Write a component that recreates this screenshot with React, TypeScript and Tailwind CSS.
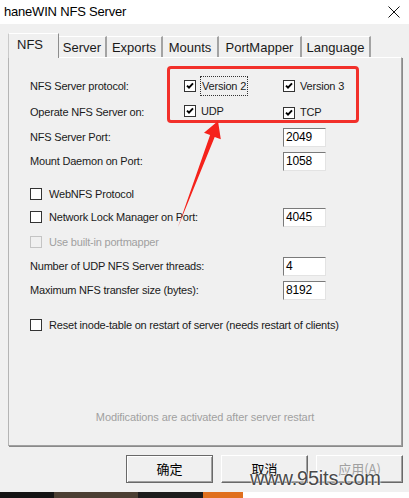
import React from 'react';

const Box = ({ checked = false, disabled = false }: { checked?: boolean; disabled?: boolean }) => (
  <span
    className={
      disabled
        ? 'flex h-[12px] w-[12px] shrink-0 items-center justify-center border border-[#c4c4c4] bg-[#f0f0f0]'
        : 'flex h-[12px] w-[12px] shrink-0 items-center justify-center border border-[#333333] bg-white'
    }
  >
    {checked && (
      <svg width="8" height="8" viewBox="0 0 8 8">
        <path d="M1 3.6l2 2.1L7 1.4" stroke="#000" strokeWidth="1.9" fill="none" />
      </svg>
    )}
  </span>
);

const Field = ({ value }: { value: string }) => (
  <div className="flex h-[19px] w-[43px] items-center border border-t-[#7a7a7a] border-l-[#7a7a7a] border-r-[#e3e3e3] border-b-[#e3e3e3] bg-white pl-[2px] text-[12px] tracking-[-0.2px] text-black">
    {value}
  </div>
);

const tabs = [
  { label: 'Server', w: 'w-[48px]' },
  { label: 'Exports', w: 'w-[56px]' },
  { label: 'Mounts', w: 'w-[56px]' },
  { label: 'PortMapper', w: 'w-[83px]' },
  { label: 'Language', w: 'w-[69px]' },
];

export default function App() {
  return (
    <div className="relative flex h-[498px] w-[409px] flex-col overflow-hidden bg-[#f0f0f0] font-['Liberation_Sans',Arial,sans-serif] text-[#1a1a1a]">
      {/* title bar */}
      <div className="flex h-[24px] shrink-0 items-center justify-between bg-white pl-[4px] pr-[9px]">
        <span className="text-[13px] tracking-[-0.2px] text-black">haneWIN NFS Server</span>
        <svg width="12" height="12" viewBox="0 0 12 12">
          <path d="M0.5 0.5l11 11M11.5 0.5l-11 11" stroke="#111" strokeWidth="1" />
        </svg>
      </div>

      {/* tabs */}
      <div className="ml-[8px] mt-[9px] flex h-[24px] shrink-0 items-end">
        <div className="z-10 -mb-px flex h-[25px] w-[51px] items-start border-l border-t border-l-[#c9c9c9] border-t-white border-r border-r-[#8d8d8d] bg-[#f0f0f0] pl-[8px] pt-[1px] text-[13px]">
          NFS
        </div>
        {tabs.map(t => (
          <div
            key={t.label}
            className={`${t.w} flex h-[21px] items-center justify-center border-t border-t-white border-r-2 border-r-[#a3a3a3] pt-[1px] text-[13px]`}
          >
            {t.label}
          </div>
        ))}
      </div>

      {/* panel */}
      <div className="relative ml-[8px] flex h-[389px] w-[394px] shrink-0 flex-col border border-t-white border-l-[#b4b4b4] border-r-[#a0a0a0] border-b-[#a0a0a0] pl-[21px] pt-[16px] text-[11px] tracking-[-0.2px] shadow-[1px_1px_0_#8a8a8a]">
        <div className="flex h-[24px] items-center">
          <span className="w-[154px]">NFS Server protocol:</span>
          <div className="flex w-[99px] items-center gap-[4px]">
            <Box checked />
            <span className="border border-dotted border-[#333] px-px py-[1px]">Version 2</span>
          </div>
          <div className="flex items-center gap-[5px]">
            <Box checked />
            <span>Version 3</span>
          </div>
        </div>

        <div className="mt-px flex h-[24px] items-center">
          <span className="w-[154px] pt-[2px]">Operate NFS Server on:</span>
          <div className="flex w-[99px] items-center gap-[5px]">
            <Box checked />
            <span>UDP</span>
          </div>
          <div className="mt-[3px] flex items-center gap-[5px]">
            <Box checked />
            <span>TCP</span>
          </div>
        </div>

        <div className="mt-[2px] flex h-[24px] items-center">
          <span className="w-[253px]">NFS Server Port:</span>
          <Field value="2049" />
        </div>

        <div className="flex h-[24px] items-center">
          <span className="w-[253px]">Mount Daemon on Port:</span>
          <Field value="1058" />
        </div>

        <div className="mt-[9px] flex h-[24px] items-center gap-[7px]">
          <Box />
          <span>WebNFS Protocol</span>
        </div>

        <div className="-mt-px flex h-[24px] items-center">
          <div className="flex w-[253px] items-center gap-[7px]">
            <Box />
            <span>Network Lock Manager on Port:</span>
          </div>
          <Field value="4045" />
        </div>

        <div className="mt-px flex h-[24px] items-center gap-[7px] text-[#a0a0a0]">
          <Box disabled />
          <span>Use built-in portmapper</span>
        </div>

        <div className="flex h-[24px] items-center">
          <span className="w-[253px]">Number of UDP NFS Server threads:</span>
          <Field value="4" />
        </div>

        <div className="flex h-[24px] items-center">
          <span className="w-[253px]">Maximum NFS transfer size (bytes):</span>
          <Field value="8192" />
        </div>

        <div className="mt-[11px] flex h-[24px] items-center gap-[7px]">
          <Box />
          <span>Reset inode-table on restart of server (needs restart of clients)</span>
        </div>

        <div className="mb-[20px] mt-auto -ml-[21px] text-center text-[11px] tracking-[-0.1px] text-[#a0a0a0]">
          Modifications are activated after server restart
        </div>

        {/* red highlight */}
        <div className="absolute left-[158px] top-[8px] h-[57px] w-[192px] rounded-[4px] border-[3px] border-[#f2302a]" />
      </div>

      {/* buttons */}
      <div className="mr-[6px] mt-[9px] flex h-[28px] shrink-0 justify-end gap-[8px] font-['Noto_Sans_CJK_SC','Noto_Sans',sans-serif] text-[13px]">
        <button className="w-[87px] border border-[#696969] bg-[#f0f0f0] text-black shadow-[inset_1px_1px_0_#fff,inset_-1px_-1px_0_#a0a0a0]">
          确定
        </button>
        <button className="w-[87px] border border-t-white border-l-white border-r-[#696969] border-b-[#696969] bg-[#f0f0f0] text-black shadow-[inset_-1px_-1px_0_#a0a0a0]">
          取消
        </button>
        <button className="w-[87px] border border-t-white border-l-white border-r-[#696969] border-b-[#696969] bg-[#f0f0f0] text-[#a0a0a0] shadow-[inset_-1px_-1px_0_#a0a0a0]">
          应用(A)
        </button>
      </div>

      {/* strip of what lies below the window */}
      <div className="mt-auto flex h-[6px] shrink-0">
        <div className="w-[54px] bg-[#141414]" />
        <div className="w-[84px] bg-[#4b3f33]" />
        <div className="w-[65px] bg-[#1c1c1c]" />
        <div className="w-[40px] bg-[#e0701e]" />
        <div className="flex-1 bg-white" />
      </div>

      {/* arrow */}
      <svg className="pointer-events-none absolute left-0 top-0" width="409" height="498">
        <polygon
          points="178,227 210.1,135.1 204,132.8 218,121 220.8,139.2 214.7,136.9"
          fill="#f5221b"
        />
      </svg>

      {/* watermark */}
      <span className="pointer-events-none absolute left-[250px] top-[463px] text-[20px] tracking-[-0.2px] text-[#4a4a4a] [text-shadow:0_0_2px_#fff,0_0_2px_#fff]">
        www.95its.com
      </span>
    </div>
  );
}
